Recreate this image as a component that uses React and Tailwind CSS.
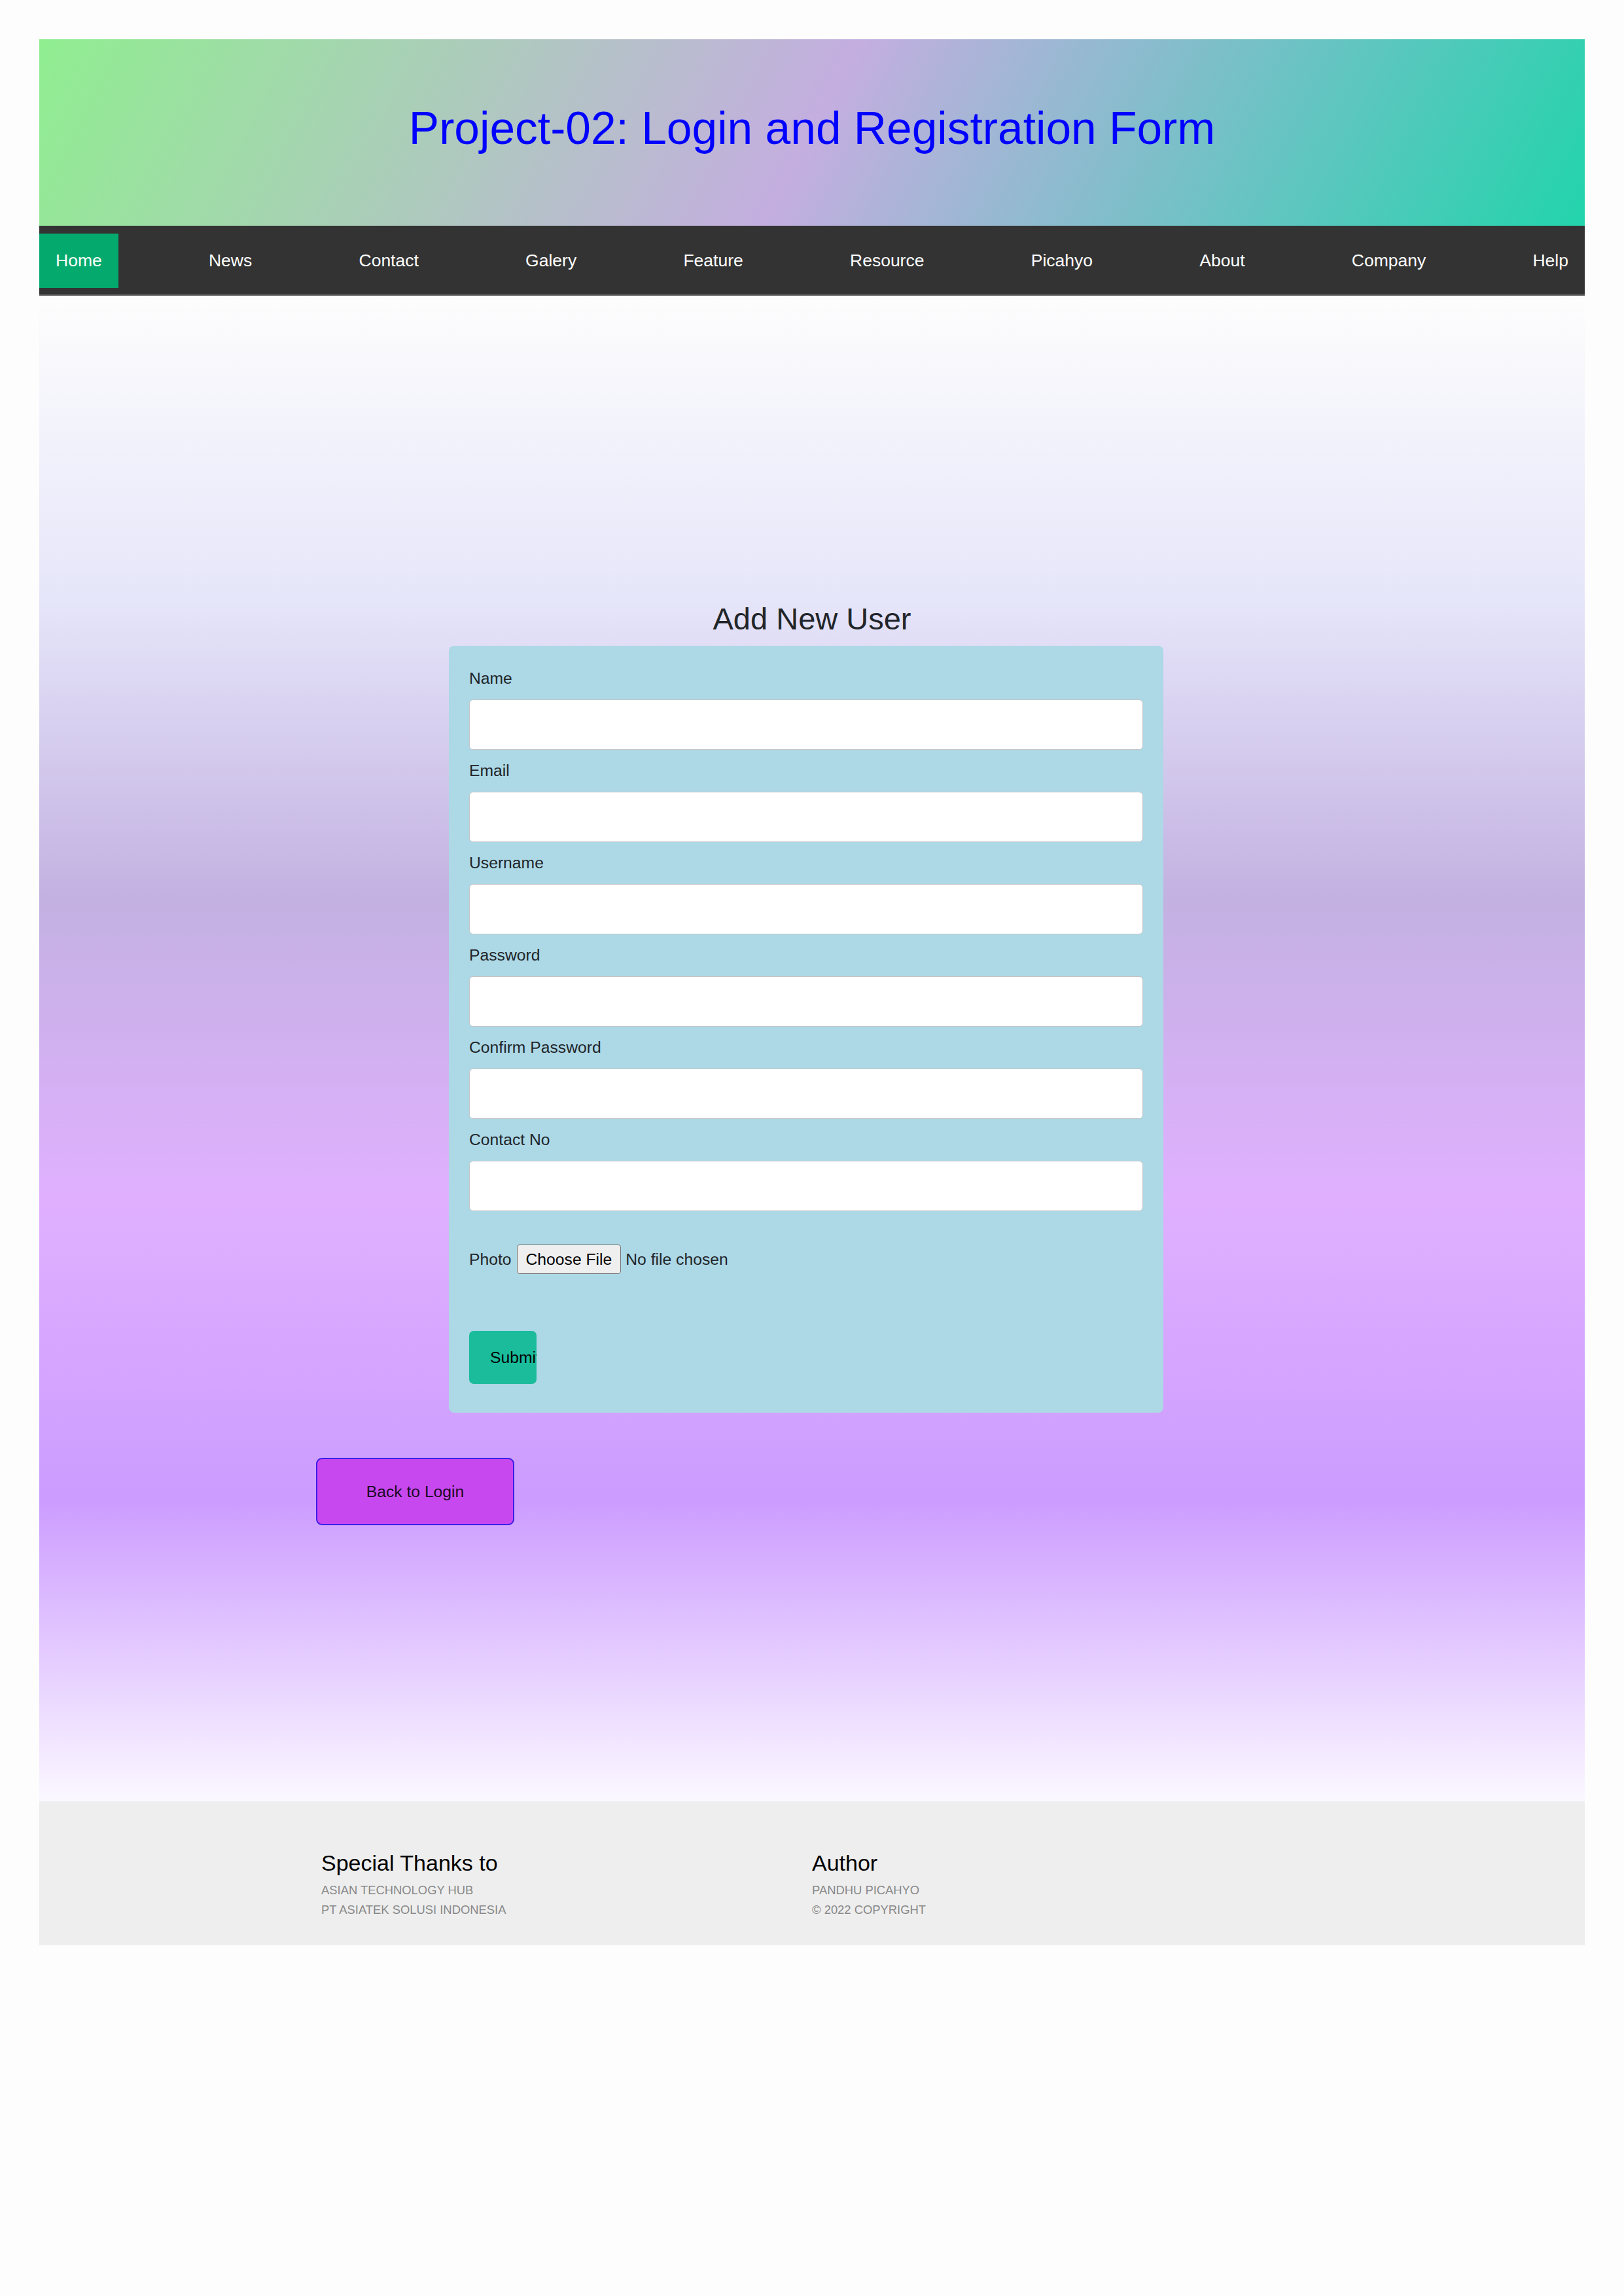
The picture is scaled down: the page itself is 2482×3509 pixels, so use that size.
import React from 'react';

const navItems = ['Home', 'News', 'Contact', 'Galery', 'Feature', 'Resource', 'Picahyo', 'About', 'Company', 'Help'];
const fields = ['Name', 'Email', 'Username', 'Password', 'Confirm Password', 'Contact No'];

export default function App() {
  return (
    <div className="min-h-[3509px] bg-[#fdfdfd] px-[60px] pt-[60px] font-['Liberation_Sans',Arial,sans-serif]">
      {/* Header */}
      <header className="h-[285px] pb-[12px] flex items-center justify-center bg-[linear-gradient(117deg,#90ee90,#c4aee0_50%,#22d4ac)]">
        <h1 className="text-[69.5px] leading-none text-[#0000ff]">Project-02: Login and Registration Form</h1>
      </header>

      {/* Nav */}
      <nav className="flex justify-between bg-[#333] pt-[12px] pb-[10px] border-b-2 border-[#666]">
        {navItems.map((item, i) => (
          <a
            key={item}
            href="#"
            className={i === 0
              ? 'h-[83px] flex items-center px-[25px] text-[26.5px] text-white bg-[#04aa6d]'
              : 'h-[83px] flex items-center px-[25px] text-[26.5px] text-white'}
          >
            {item}
          </a>
        ))}
      </nav>

      {/* Main */}
      <main className="h-[2301px] pt-[467px] bg-[linear-gradient(to_bottom,#fdfdfd,#e6e6fa_20%,#c3b1e1_40%,#e0b0ff_60%,#cc9cff_80%,#fbf8ff)]">
        <h2 className="text-center text-[47px] leading-[54px] text-[#212529]">Add New User</h2>

        <form className="mt-[14px] ml-[626px] w-[1092px] rounded-[8px] bg-[#add8e6] pt-[35px] px-[31px] pb-[44px] text-[24.7px] text-[#212529]">
          {fields.map((f) => (
            <div key={f} className="pb-[17px]">
              <label className="block leading-[29px] mb-[18px]">{f}</label>
              <input
                type={f.includes('Password') ? 'password' : 'text'}
                className="block w-full h-[77px] bg-white border border-[#c4c4c4] rounded-[6px]"
              />
            </div>
          ))}

          <div className="mt-[34px] h-[45px] flex items-center">
            <span>Photo</span>
            <span className="ml-[8px] h-[45px] px-[13px] flex items-center bg-[#efefef] border border-[#767676] rounded-[4px] text-black">
              Choose File
            </span>
            <span className="ml-[7px]">No file chosen</span>
          </div>

          <button
            type="button"
            className="mt-[87px] block w-[103px] h-[81px] overflow-hidden whitespace-nowrap text-left pl-[32px] bg-[#1abc9c] rounded-[7px] text-black"
          >
            Submit
          </button>
        </form>

        <button
          type="button"
          className="mt-[69px] ml-[423px] w-[303px] h-[103px] border-2 border-[#3b1fe6] rounded-[9px] bg-[#c848f0] text-[24.7px] text-[#1a0a24]"
        >
          Back to Login
        </button>
      </main>

      {/* Footer */}
      <footer className="h-[220px] bg-[#eeeeee] pt-[75px]">
        <div className="mx-auto w-[1500px] grid grid-cols-2">
          <div>
            <h3 className="text-[34px] leading-[39px] text-black">Special Thanks to</h3>
            <p className="mt-[7px] text-[18.4px] leading-[30px] text-[#888]">ASIAN TECHNOLOGY HUB</p>
            <p className="text-[18.4px] leading-[30px] text-[#888]">PT ASIATEK SOLUSI INDONESIA</p>
          </div>
          <div>
            <h3 className="text-[34px] leading-[39px] text-black">Author</h3>
            <p className="mt-[7px] text-[18.4px] leading-[30px] text-[#888]">PANDHU PICAHYO</p>
            <p className="text-[18.4px] leading-[30px] text-[#888]">&copy; 2022 COPYRIGHT</p>
          </div>
        </div>
      </footer>
    </div>
  );
}
